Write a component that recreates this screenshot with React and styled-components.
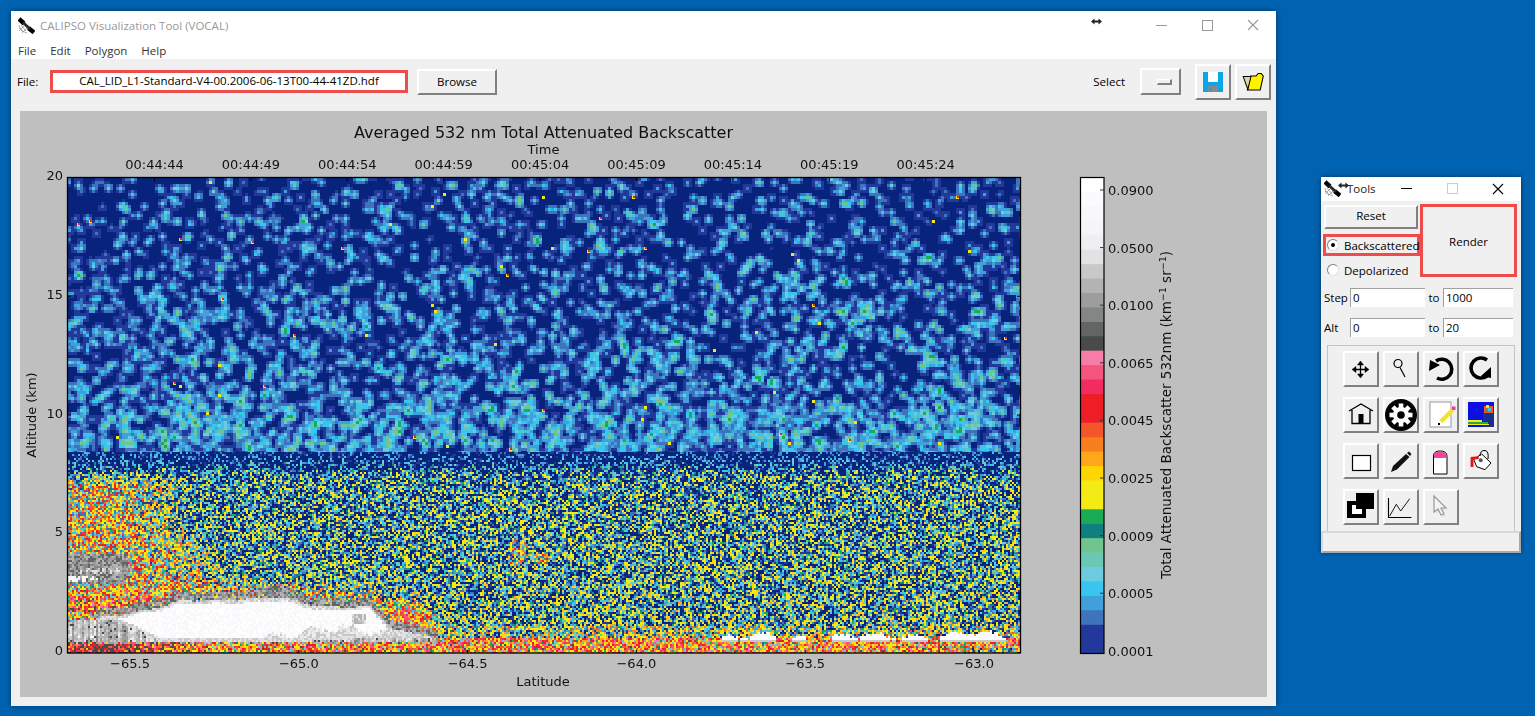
import React, { useLayoutEffect, useRef } from "react"
import styled, { createGlobalStyle, css } from "styled-components"

const GlobalStyle = createGlobalStyle`
    html, body{
        margin: 0;
        height: 716px;
        overflow: hidden;
        background-color: #0063B1;
    }
    *{
        box-sizing: border-box;
    }
`

const raised = css`
    background-color: #F0F0F0;
    border-style: solid;
    border-width: 2px;
    border-color: #FFFFFF #808080 #808080 #FFFFFF;
`

const Desktop = styled.div`
    display: flex;
    align-items: flex-start;
    gap: 45px;
    padding: 11px;
    font-family: "Open Sans", "Noto Sans", sans-serif;
    font-size: 11.5px;
    color: #000000;
`

const MainWindow = styled.div`
    width: 1265px;
    height: 695px;
    flex: none;
    background-color: #F0F0F0;
    box-shadow: 0 0 6px rgba(0, 0, 0, 0.45);
`

const TitleBar = styled.div`
    display: flex;
    align-items: center;
    height: 28px;
    padding-left: 7px;
    background-color: #FFFFFF;
    color: #999999;
`

const TitleText = styled.span`
    margin-left: 5px;
    white-space: nowrap;
`

const ResizeCursor = styled.span`
    display: flex;
    flex: none;
    margin-left: auto;
    width: 47px;
    margin-top: -8px;
`

const WinControl = styled.span`
    display: flex;
    flex: none;
    justify-content: center;
    align-items: center;
    width: 46px;
    height: 28px;
    color: #999999;
`

const MenuBar = styled.div`
    display: flex;
    gap: 14px;
    height: 20px;
    padding: 2px 0 0 7px;
    align-items: center;
    background-color: #FFFFFF;
    color: #333333;
`

const Toolbar = styled.div`
    display: flex;
    align-items: center;
    height: 45px;
    padding: 0 5px 0 6px;
`

const FieldLabel = styled.span`
    width: 33px;
    flex: none;
`

const FileBox = styled.div`
    width: 358px;
    height: 23px;
    border: 3px solid #EF4B4B;
    background-color: #FFFFFF;
    text-align: center;
    line-height: 16px;
    white-space: nowrap;
`

const BrowseButton = styled.button`
    ${raised}
    font: inherit;
    color: #000000;
    width: 80px;
    height: 26px;
    margin-left: 9px;
    padding: 0;
`

const SelectLabel = styled.span`
    margin-left: auto;
    margin-right: 15px;
`

const SelectButton = styled.div`
    ${raised}
    display: flex;
    align-items: center;
    justify-content: flex-end;
    width: 41px;
    height: 27px;
    padding-right: 7px;
    margin-right: 14px;
`

const Indicator = styled.span`
    width: 15px;
    height: 6px;
    ${raised}
    border-width: 1px;
    border-right-width: 2px;
    border-bottom-width: 2px;
`

const IconButton = styled.button`
    ${raised}
    display: flex;
    align-items: center;
    justify-content: center;
    width: 36px;
    height: 36px;
    padding: 0;
    flex: none;
`

const ToolbarIcon = styled(IconButton)`
    margin-left: ${(p) => p.$gap || 0}px;
`

const FigurePanel = styled.div`
    position: relative;
    width: 1247px;
    height: 586px;
    margin: 7px 9px 0 9px;
    background-color: #BFBFBF;
`

const HeatCanvas = styled.canvas`
    position: absolute;
    left: 48px;
    top: 67px;
    display: block;
`

const Chart = styled.svg`
    position: relative;
    display: block;
    width: 1247px;
    height: 586px;
    text{
        font-family: "DejaVu Sans", sans-serif;
        font-size: 13px;
        fill: #111111;
    }
`

const ToolsWindow = styled.div`
    width: 200px;
    height: 375px;
    flex: none;
    margin-top: 166px;
    background-color: #F0F0F0;
    box-shadow: 0 0 5px rgba(0, 0, 0, 0.5);
`

const ToolsTitle = styled.div`
    display: flex;
    align-items: center;
    height: 24px;
    padding: 0 0 1px 3px;
    background-color: #FFFFFF;
    color: #222222;
`

const ToolsControl = styled(WinControl)`
    height: 24px;
`

const ToolsName = styled.span`
    margin-right: auto;
`

const ToolsResize = styled.span`
    display: flex;
    margin: -6px -2px 0 -3px;
`

const ToolsTop = styled.div`
    display: grid;
    grid-template-columns: 97px 97px;
    padding: 3px 0 0 2px;
`

const LeftColumn = styled.div`
    display: flex;
    flex-direction: column;
`

const ResetButton = styled.button`
    ${raised}
    font: inherit;
    color: #000000;
    width: 94px;
    height: 24px;
    margin: 1px 0 5px 1px;
    padding: 0 0 3px 0;
`

const RadioRow = styled.label`
    display: flex;
    align-items: center;
    gap: 5px;
    height: 22px;
    padding-left: 1px;
    margin-bottom: ${(p) => (p.$spaced ? 3 : 0)}px;
    border: ${(p) => (p.$marked ? "3px solid #EF4B4B" : "3px solid transparent")};
    white-space: nowrap;
`

const Radio = styled.span`
    display: flex;
    flex: none;
    align-items: center;
    justify-content: center;
    width: 12px;
    height: 12px;
    border-radius: 50%;
    background-color: #FFFFFF;
    border: 1px solid #808080;
    border-right-color: #E0E0E0;
    border-bottom-color: #E0E0E0;
    &::after{
        content: "";
        display: ${(p) => (p.$on ? "block" : "none")};
        width: 4px;
        height: 4px;
        border-radius: 50%;
        background-color: #000000;
    }
`

const RenderBox = styled.div`
    display: flex;
    align-items: center;
    justify-content: center;
    width: 97px;
    height: 73px;
    border: 3px solid #EF4B4B;
    padding-top: 2px;
`

const RangeRow = styled.div`
    display: flex;
    align-items: center;
    height: 19px;
    margin: ${(p) => p.$top}px 0 0 3px;
`

const RangeLabel = styled.span`
    width: 26px;
`

const RangeInput = styled.div`
    width: ${(p) => p.$w}px;
    height: 19px;
    line-height: 17px;
    padding-left: 2px;
    background-color: #FFFFFF;
    border-top: 1px solid #A0A0A0;
    border-left: 1px solid #A0A0A0;
`

const RangeTo = styled.span`
    width: 18px;
    text-align: center;
`

const ToolGroup = styled.div`
    display: grid;
    grid-template-columns: repeat(4, 36px);
    grid-auto-rows: 36px;
    column-gap: 4px;
    row-gap: 10px;
    justify-content: center;
    align-content: start;
    width: 188px;
    height: 186px;
    margin: 8px 0 0 6px;
    padding-top: 5px;
    border: 1px solid #C4C4C4;
    border-bottom: none;
`

const StatusBar = styled.div`
    height: 22px;
    width: 200px;
    border: 2px solid;
    border-color: #D8D8D8 #A8A8A8 #A8A8A8 #D8D8D8;
`

const CloseIcon = ({ color }) => (
    <svg width="12" height="12" viewBox="0 0 12 12">
        <path d="M1 1 L11 11 M11 1 L1 11" stroke={color} strokeWidth="1.1" />
    </svg>
)

const SquareIcon = ({ color }) => (
    <svg width="11" height="11" viewBox="0 0 11 11">
        <rect x="0.5" y="0.5" width="10" height="10" fill="none" stroke={color} />
    </svg>
)

const MinIcon = ({ color }) => (
    <svg width="11" height="11" viewBox="0 0 11 11">
        <path d="M0 5.5 H11" stroke={color} />
    </svg>
)

const ResizeIcon = () => (
    <svg width="11" height="7" viewBox="0 0 11 7">
        <path d="M0 3.5 L3.5 0.5 V2.5 H7.5 V0.5 L11 3.5 L7.5 6.5 V4.5 H3.5 V6.5 Z" fill="#222222" />
    </svg>
)

const SatelliteIcon = () => (
    <svg width="17" height="17" viewBox="0 0 17 17">
        <path d="M1 8 Q2 14 9 16 M1 11 L5 15 M3 8 L8 14 M1 14 L6 9 M4 16 L9 11" stroke="#8A8A8A" strokeWidth="0.7" fill="none" />
        <path d="M1 2 L6 6.5 M10.5 11 L16 15.5" stroke="#000000" strokeWidth="4.4" />
        <path d="M5 5.5 L12 12" stroke="#2A2A2A" strokeWidth="3" />
    </svg>
)

const SaveIcon = () => (
    <svg width="20" height="20" viewBox="0 0 20 20">
        <rect width="20" height="20" fill="#0CA5E9" />
        <rect x="5" y="0" width="10" height="10" fill="#FFFFFF" />
        <rect x="5" y="14" width="10" height="6" fill="#8A8A8A" />
        <rect x="6" y="15" width="3" height="5" fill="#0CA5E9" opacity="0.7" />
    </svg>
)

const OpenIcon = () => (
    <svg width="22" height="18" viewBox="-0.5 0 21 17.5">
        <path d="M7.5 3 H13 L15 0.5 H18 L20 3 L17 16.5 H4.5 Z" fill="#FFF200" stroke="#000000" strokeWidth="1" />
        <path d="M0.5 3.5 H8 L5 16 Z" fill="#E4D5A8" stroke="#000000" strokeWidth="1" />
    </svg>
)

const GEAR_ANGLES = [0, 45, 90, 135, 180, 225, 270, 315]

// tool icons all sit in a 32 box
const icons = {
    pan: (
        <g fill="#000000" stroke="#000000">
            <path d="M15.5 11 V22 M10 16.5 H21" strokeWidth="1.3" />
            <path d="M15.5 8 L12.5 12 H18.5 Z M15.5 25 L12.5 21 H18.5 Z M7 16.5 L11 13.5 V19.5 Z M24 16.5 L20 13.5 V19.5 Z" strokeWidth="0.5" />
        </g>
    ),
    zoom: (
        <g fill="none" stroke="#000000" strokeWidth="1.2">
            <circle cx="13" cy="10.5" r="4" />
            <path d="M15 14.5 L20 24" />
        </g>
    ),
    undo: (
        <g transform="translate(-2 -2)">
            <path d="M13 10 A10 10 0 1 1 14 27" fill="none" stroke="#000000" strokeWidth="3.6" />
            <path d="M6 20 L7 9 L17 14 Z" fill="#000000" />
        </g>
    ),
    redo: (
        <g transform="translate(-2 -2)">
            <path d="M24 9 A10 10 0 1 0 24 25" fill="none" stroke="#000000" strokeWidth="3.6" />
            <path d="M28 16 L28 27 L18 25 Z" fill="#000000" />
        </g>
    ),
    home: (
        <g transform="translate(0 -2)">
            <path d="M4 14 L16 7 L28 14 M7 13 V26.5 H25 V13" fill="none" stroke="#000000" strokeWidth="1.3" />
            <rect x="13.5" y="17" width="5" height="10" fill="#000000" />
        </g>
    ),
    gear: (
        <g>
            <circle cx="16" cy="16" r="16" fill="#000000" />
            <circle cx="16" cy="16" r="8" fill="#FFFFFF" />
            {GEAR_ANGLES.map((a) => (
                <rect key={a} x="13.7" y="4.5" width="4.6" height="8" fill="#FFFFFF" transform={`rotate(${a} 16 16)`} />
            ))}
            <circle cx="16" cy="16" r="3.8" fill="#000000" />
        </g>
    ),
    note: (
        <g>
            <rect x="5" y="3" width="21" height="25" fill="#FFFFFF" stroke="#A8A8A8" strokeWidth="1.2" />
            <path d="M16 22.5 L27.5 11" stroke="#F5E02A" strokeWidth="4" />
            <rect x="27" y="7.5" width="3.5" height="3.5" fill="#EE3A94" />
            <rect x="13" y="24" width="2" height="2" fill="#000000" />
        </g>
    ),
    render: (
        <g shapeRendering="crispEdges">
            <rect x="3" y="3" width="26" height="25" fill="#0A10E0" />
            <rect x="18" y="13" width="11" height="15" fill="#15308E" />
            <rect x="3" y="21" width="14" height="2" fill="#F4EA14" />
            <rect x="3" y="23" width="20" height="2" fill="#19AB55" />
            <rect x="3" y="25" width="21" height="1" fill="#F4EA14" />
            <rect x="19" y="7" width="9" height="7" fill="#F5552A" />
            <rect x="21" y="6" width="3" height="3" fill="#F4EA14" />
            <rect x="23" y="9" width="3" height="3" fill="#38C6EF" />
            <rect x="20" y="11" width="3" height="2" fill="#19AB55" />
        </g>
    ),
    rect: <rect x="7.5" y="10.5" width="18" height="15" fill="#FFFFFF" stroke="#000000" strokeWidth="1.2" />,
    pen: (
        <g fill="#111111">
            <path d="M6 27 L8 21 L21 9 L24.5 12 L12 24.5 Z" />
            <path d="M22 8 L24 6.5 L26.5 9 L25 11 Z" />
        </g>
    ),
    eraser: (
        <g>
            <path d="M8.5 29 V11 Q8.5 6 15 6 Q22 6 22 11 V29 Z" fill="#FFFFFF" stroke="#000000" strokeWidth="1" />
            <path d="M9 13 V11 Q9 6.5 15 6.5 Q21.5 6.5 21.5 11 V13 Z" fill="#F0469B" />
        </g>
    ),
    fill: (
        <g>
            <path d="M8.7 14.3 L16.7 9 L26 18 L20 24.7 L11.7 21.7 Z" fill="#FFFFFF" stroke="#000000" strokeWidth="1" />
            <path d="M15 11 Q15 5 20 5.5 Q24 6 23 14" fill="none" stroke="#000000" strokeWidth="1" />
            <circle cx="15.7" cy="15.3" r="2" fill="#555555" />
            <path d="M13.7 12.7 L7 13.3 V22" fill="none" stroke="#E51212" strokeWidth="2.8" />
        </g>
    ),
    layers: (
        <g shapeRendering="crispEdges">
            <rect x="2" y="10" width="19" height="17" fill="#000000" />
            <rect x="7" y="14" width="10" height="9" fill="#FFFFFF" />
            <rect x="11" y="2" width="18" height="16" fill="#000000" />
        </g>
    ),
    chart: (
        <g fill="none" stroke="#000000">
            <path d="M3.5 7 V26.5 H26.5" strokeWidth="1.1" />
            <path d="M4.7 25 L11.3 13.3 L15.7 20 L24.7 7.7" strokeWidth="0.9" />
        </g>
    ),
    cursor: (
        <g>
            <path d="M10.5 7 V23 L14.5 20 L17.5 26 L20.5 25 L17.5 19 L22.5 19 Z" fill="#D8D8D8" opacity="0.6" />
            <path d="M9 5 V21 L13 18 L16 24 L19 23 L16 17 L21 17 Z" fill="#F4F4F4" stroke="#999999" strokeWidth="1.2" />
        </g>
    ),
}

const TOOL_NAMES = ["pan", "zoom", "undo", "redo", "home", "gear", "note", "render", "rect", "pen", "eraser", "fill", "layers", "chart", "cursor"]

function ToolIcon({ name }) {
    return (
        <svg width="32" height="32" viewBox="0 0 32 32">
            {icons[name]}
        </svg>
    )
}

const TIME_TICKS = ["00:44:44", "00:44:49", "00:44:54", "00:44:59", "00:45:04", "00:45:09", "00:45:14", "00:45:19", "00:45:24"]
const LAT_TICKS = ["−65.5", "−65.0", "−64.5", "−64.0", "−63.5", "−63.0"]
const ALT_TICKS = ["20", "15", "10", "5", "0"]
const BAR_TICKS = ["0.0900", "0.0500", "0.0100", "0.0065", "0.0045", "0.0025", "0.0009", "0.0005", "0.0001"]

// colour bar, bottom to top
const COLORS = [
    "#22389A", "#22389A", "#3E74BB", "#3FA0DC", "#38C6EF", "#6CCBDF", "#6BC8B5", "#6FC48F", "#0F7F7F", "#19AB55",
    "#F4EA14", "#F4EA14", "#FFD500", "#FFA619", "#F97F1E", "#F5552A", "#EE1F24", "#EE1F24", "#F22C5E", "#F4557F", "#F57DA8",
    "#4A4A4A", "#636564", "#848685", "#9D9D9D", "#B3B3B3", "#C8C8C8", "#E2E2E4", "#EFEFF1", "#F5F5F7", "#F8F8FB", "#FBFBFE", "#FFFFFF",
]
const NAVY = "#07237B"

// [score limit, colour index] for the noisy lower layer
const SCORE_BINS = [
    [0.33, -1], [0.42, 1], [0.5, 2], [0.57, 3], [0.64, 4], [0.69, 5], [0.73, 6], [0.77, 7], [0.79, 8], [0.82, 9],
    [1.0, 10], [1.08, 12], [1.14, 13], [1.2, 14], [1.28, 15], [1.42, 16], [1.5, 18], [1.58, 19], [1.64, 20],
]

// [field limit, colour index] for the blobs of the upper layer
const BLOB_BINS = [
    [0.05, -1], [0.12, 0], [0.2, 2], [0.3, 3], [0.44, 4], [0.6, 5], [0.8, 7], [1.15, 9],
]

function binIndex(bins, score, top) {
    for (const [limit, idx] of bins) {
        if (score < limit) return idx
    }
    return top
}

function makeRandom(seed) {
    let a = seed
    return function () {
        a = (a + 0x6d2b79f5) | 0
        let t = Math.imul(a ^ (a >>> 15), 1 | a)
        t = (t + Math.imul(t ^ (t >>> 7), 61 | t)) ^ t
        return ((t ^ (t >>> 14)) >>> 0) / 4294967296
    }
}

function line(points, x) {
    for (let i = 1; i < points.length; i++) {
        if (x <= points[i][0]) {
            const [x0, y0] = points[i - 1]
            const [x1, y1] = points[i]
            return y0 + ((y1 - y0) * (x - x0)) / (x1 - x0)
        }
    }
    return points[points.length - 1][1]
}

const clamp = (v, a, b) => Math.min(b, Math.max(a, v))

const CLOUD_TOP = [[95, 616], [110, 613], [160, 605], [175, 600], [190, 598], [285, 596], [300, 601], [330, 604], [368, 604], [376, 612], [393, 628], [425, 632], [436, 636]]
const CLOUD_BOTTOM = [[95, 618], [110, 618], [140, 630], [160, 640], [290, 641], [350, 638], [400, 637], [436, 636]]

function drawUpper(ctx, rand) {
    const cols = 318
    const rows = 92
    const streak = []
    for (let c = 0; c < cols + 2; c++) streak.push(0.7 + rand() * 0.6)
    const peaks = []
    for (let r = 0; r < rows + 2; r++) {
        const t = r / rows
        let density = 0.07 + 0.11 * t
        if (t > 0.83) density += 0.08
        peaks.push([])
        for (let c = 0; c < cols + 2; c++) {
            const hit = rand() < density * streak[c]
            const b = rand()
            peaks[r].push(hit ? 0.4 + b * b * 1.5 : rand() * 0.06)
        }
    }
    ctx.fillStyle = NAVY
    ctx.fillRect(0, 0, 953, 276)
    for (let r = 1; r <= rows; r++) {
        for (let c = 1; c <= cols; c++) {
            const g = peaks
            const field = (g[r][c] * 6 + (g[r - 1][c] + g[r + 1][c] + g[r][c - 1] + g[r][c + 1]) * 2 + g[r - 1][c - 1] + g[r - 1][c + 1] + g[r + 1][c - 1] + g[r + 1][c + 1]) / 18
            const idx = binIndex(BLOB_BINS, field, 10)
            if (idx >= 0) {
                ctx.fillStyle = COLORS[idx]
                ctx.fillRect((c - 1) * 3, (r - 1) * 3, 3, 3)
            }
        }
    }
    // the few bright specks of the upper layer
    for (let i = 0; i < 55; i++) {
        const x = Math.floor(rand() * 315) * 3
        const y = Math.floor(rand() * 91) * 3
        ctx.fillStyle = "#F4EA14"
        ctx.fillRect(x, y, 3, 3)
        if (rand() > 0.65) {
            ctx.fillStyle = "#EE1F24"
            ctx.fillRect(x + 1, y, 2, 2)
        }
    }
}

function heat(x, y) {
    let h = -0.01 + (0.12 * (y - 455)) / 200
    if (y < 478) h -= ((478 - y) / 23) * 0.36
    // warm patch on the left
    const reach = 130 + 20 * Math.sin(y / 17)
    const fade = clamp((y - 472) / 14, 0, 1)
    const dx = (x - 68) / reach
    h += 0.4 * fade * clamp(1.15 - dx * dx, 0, 1)
    // round the cloud top
    if (x > 68 && x < 440) {
        const top = x < 95 ? 612 : line(CLOUD_TOP, x)
        const d = top - y
        if (d > 0 && d < 26) h += 0.42 * (1 - d / 26)
    }
    // small patch beside the cloud tail
    const tail = Math.hypot((x - 405) / 32, (y - 612) / 22)
    if (tail < 1) h += 0.45 * (1 - tail)
    const spot = Math.hypot((x - 517) / 12, (y - 552) / 14)
    if (spot < 1) h += 0.25
    const spot2 = Math.hypot((x - 540) / 9, (y - 558) / 6)
    if (spot2 < 1) h += 0.25
    if (y > 624) h += 0.14
    if (y > 637) h += 0.4
    if (x > 960 && y > 647) h -= 0.4
    return h
}

function cloudLevel(x, y, rand, col, ground) {
    // upper grey patch on the left edge
    if (x < 136 - Math.abs(y - 568) * 0.5 - rand() * 10 && y > 553 && y < 584) {
        if (y > 574 && y < 582 && x < 104 - Math.abs(y - 578) * 5 - rand() * 22 && rand() > 0.12) return 29 + Math.floor(rand() * 4)
        if (y > 566 && y < 574 && x > 78 && x < 122 && rand() > 0.5) return 26 + Math.floor(rand() * 2)
        return 22 + Math.floor(rand() * 4)
    }
    if (x > 436) return null
    const t = (x < 95 ? 616 : line(CLOUD_TOP, x)) + ground[x] * 3
    const b = x < 95 ? 618 : line(CLOUD_BOTTOM, x)
    if (x >= 95 && y >= t && y <= b) {
        if (x > 350 && x < 366 && y > 612 && y < 623) return 25 + Math.floor(rand() * 3)
        const d = Math.min(y - t, b - y)
        if (d < 3) return 26 + Math.floor(rand() * 2)
        if (x > 262 && y > b - 2 - ground[x] * 14) return 26 + Math.floor(rand() * 3)
        return 30 + Math.floor(rand() * 3)
    }
    // grey halo over the cloud
    const bump = x > 250 && x < 305 ? 6 * (1 - Math.abs(x - 278) / 28) : 0
    const halo = x < 95 ? 622 - (x - 68) * 0.37 : t - 8 - bump
    if (y >= halo && y < t && rand() > 0.12 && x > 68) return 22 + Math.floor(rand() * 4)
    // grey below the cloud
    if (y > b && y < 643 - col[x] * 2 && (x >= 95 || y >= halo)) {
        if (y > 634 && y < 638 && x < 132 && rand() > 0.7) return 30 + Math.floor(rand() * 3)
        if (rand() < 0.06) return 21
        return 23 + Math.floor(col[x] * 4 + rand() * 2)
    }
    return null
}

function drawLower(ctx, rand) {
    const col = []
    for (let x = 0; x < 1100; x += 2) {
        const v = rand()
        col[x] = v
        col[x + 1] = v
    }
    const ground = []
    for (let x = 0; x < 1100; x += 2) {
        const g = clamp(0.5 + 0.25 * Math.sin(x / 6) + 0.22 * Math.sin(x / 17 + 1) + (rand() - 0.5) * 0.3, 0, 1)
        ground[x] = g
        ground[x + 1] = g
    }
    for (let py = 452; py < 653; py += 2) {
        for (let px = 68; px < 1021; px += 2) {
            let idx = cloudLevel(px, py, rand, col, ground)
            if (idx === null && px >= 720) {
                const limit = px > 890 ? 0.25 : 0.45
                const top = 637 - (ground[px] - limit) * 10
                if (ground[px] > limit && py >= top && py < 641) {
                    idx = py > 638 ? 26 : 31
                }
            }
            if (idx === null) {
                idx = binIndex(SCORE_BINS, rand() * 1.02 + heat(px, py), 21)
            }
            ctx.fillStyle = idx < 0 ? NAVY : COLORS[idx]
            ctx.fillRect(px - 68, py - 178, 2, 2)
        }
    }
}

function HeatMap() {
    const ref = useRef(null)

    useLayoutEffect(() => {
        const ctx = ref.current.getContext("2d")
        const rand = makeRandom(532)
        drawUpper(ctx, rand)
        drawLower(ctx, rand)
    }, [])

    return <HeatCanvas ref={ref} width={953} height={475} />
}

function Figure() {
    return (
        <FigurePanel>
            <HeatMap />
            <Chart viewBox="20 111 1247 586">
                <text x="543.5" y="138" textAnchor="middle" style={{ fontSize: 16 }}>Averaged 532 nm Total Attenuated Backscatter</text>
                <text x="543.5" y="154" textAnchor="middle">Time</text>
                {TIME_TICKS.map((t, i) => (
                    <g key={t}>
                        <text x={154.5 + i * 96.4} y="169" textAnchor="middle">{t}</text>
                        <path d={`M${154.5 + i * 96.4} 178 V181`} stroke="#000000" />
                    </g>
                ))}
                {ALT_TICKS.map((t, i) => (
                    <g key={t}>
                        <text x="63" y={180 + i * 118.75} textAnchor="end">{t}</text>
                        <path d={`M68 ${177.5 + i * 118.75} H71 M1020 ${177.5 + i * 118.75} H1017`} stroke="#000000" />
                    </g>
                ))}
                {LAT_TICKS.map((t, i) => (
                    <g key={t}>
                        <text x={130 + i * 168.8} y="668" textAnchor="middle">{t}</text>
                        <path d={`M${130 + i * 168.8} 653 V650`} stroke="#000000" />
                    </g>
                ))}
                <text x="543" y="686" textAnchor="middle">Latitude</text>
                <text transform="translate(36 415) rotate(-90)" textAnchor="middle">Altitude (km)</text>
                <rect x="67.5" y="177.5" width="953" height="475.5" fill="none" stroke="#000000" strokeWidth="1.3" />
                {COLORS.map((c, i) => (
                    <rect key={i} x="1081" y={653 - (i + 1) * 14.42} width="23" height="14.92" fill={c} />
                ))}
                <rect x="1080.5" y="177.5" width="23.5" height="476" fill="none" stroke="#000000" strokeWidth="1.2" />
                {BAR_TICKS.map((t, i) => (
                    <g key={t}>
                        <text x="1108" y={195 + i * 57.6}>{t}</text>
                        <path d={`M1104 ${190 + i * 57.6} H1100`} stroke="#333333" />
                    </g>
                ))}
                <text transform="translate(1171 415) rotate(-90)" textAnchor="middle" style={{ fontSize: 13.5 }}>
                    Total Attenuated Backscatter 532nm (km
                    <tspan dy="-5" style={{ fontSize: 9.5 }}>−1</tspan>
                    <tspan dy="5"> sr</tspan>
                    <tspan dy="-5" style={{ fontSize: 9.5 }}>−1</tspan>
                    <tspan dy="5">)</tspan>
                </text>
            </Chart>
        </FigurePanel>
    )
}

function ToolsPanel() {
    return (
        <ToolsWindow>
            <ToolsTitle>
                <SatelliteIcon />
                <ToolsResize><ResizeIcon /></ToolsResize>
                <ToolsName>Tools</ToolsName>
                <ToolsControl><MinIcon color="#000000" /></ToolsControl>
                <ToolsControl><SquareIcon color="#CCCCCC" /></ToolsControl>
                <ToolsControl><CloseIcon color="#000000" /></ToolsControl>
            </ToolsTitle>
            <ToolsTop>
                <LeftColumn>
                    <ResetButton>Reset</ResetButton>
                    <RadioRow $marked $spaced><Radio $on />Backscattered</RadioRow>
                    <RadioRow><Radio />Depolarized</RadioRow>
                </LeftColumn>
                <RenderBox>Render</RenderBox>
            </ToolsTop>
            <RangeRow $top={7}>
                <RangeLabel>Step</RangeLabel>
                <RangeInput $w={75}>0</RangeInput>
                <RangeTo>to</RangeTo>
                <RangeInput $w={70}>1000</RangeInput>
            </RangeRow>
            <RangeRow $top={11}>
                <RangeLabel>Alt</RangeLabel>
                <RangeInput $w={75}>0</RangeInput>
                <RangeTo>to</RangeTo>
                <RangeInput $w={70}>20</RangeInput>
            </RangeRow>
            <ToolGroup>
                {TOOL_NAMES.map((name) => (
                    <IconButton key={name} aria-label={name}>
                        <ToolIcon name={name} />
                    </IconButton>
                ))}
            </ToolGroup>
            <StatusBar />
        </ToolsWindow>
    )
}

export default function App() {
    return (
        <Desktop>
            <GlobalStyle />
            <MainWindow>
                <TitleBar>
                    <SatelliteIcon />
                    <TitleText>CALIPSO Visualization Tool (VOCAL)</TitleText>
                    <ResizeCursor><ResizeIcon /></ResizeCursor>
                    <WinControl><MinIcon color="#999999" /></WinControl>
                    <WinControl><SquareIcon color="#999999" /></WinControl>
                    <WinControl><CloseIcon color="#999999" /></WinControl>
                </TitleBar>
                <MenuBar>
                    <span>File</span>
                    <span>Edit</span>
                    <span>Polygon</span>
                    <span>Help</span>
                </MenuBar>
                <Toolbar>
                    <FieldLabel>File:</FieldLabel>
                    <FileBox>CAL_LID_L1-Standard-V4-00.2006-06-13T00-44-41ZD.hdf</FileBox>
                    <BrowseButton>Browse</BrowseButton>
                    <SelectLabel>Select</SelectLabel>
                    <SelectButton><Indicator /></SelectButton>
                    <ToolbarIcon><SaveIcon /></ToolbarIcon>
                    <ToolbarIcon $gap={4}><OpenIcon /></ToolbarIcon>
                </Toolbar>
                <Figure />
            </MainWindow>
            <ToolsPanel />
        </Desktop>
    )
}
